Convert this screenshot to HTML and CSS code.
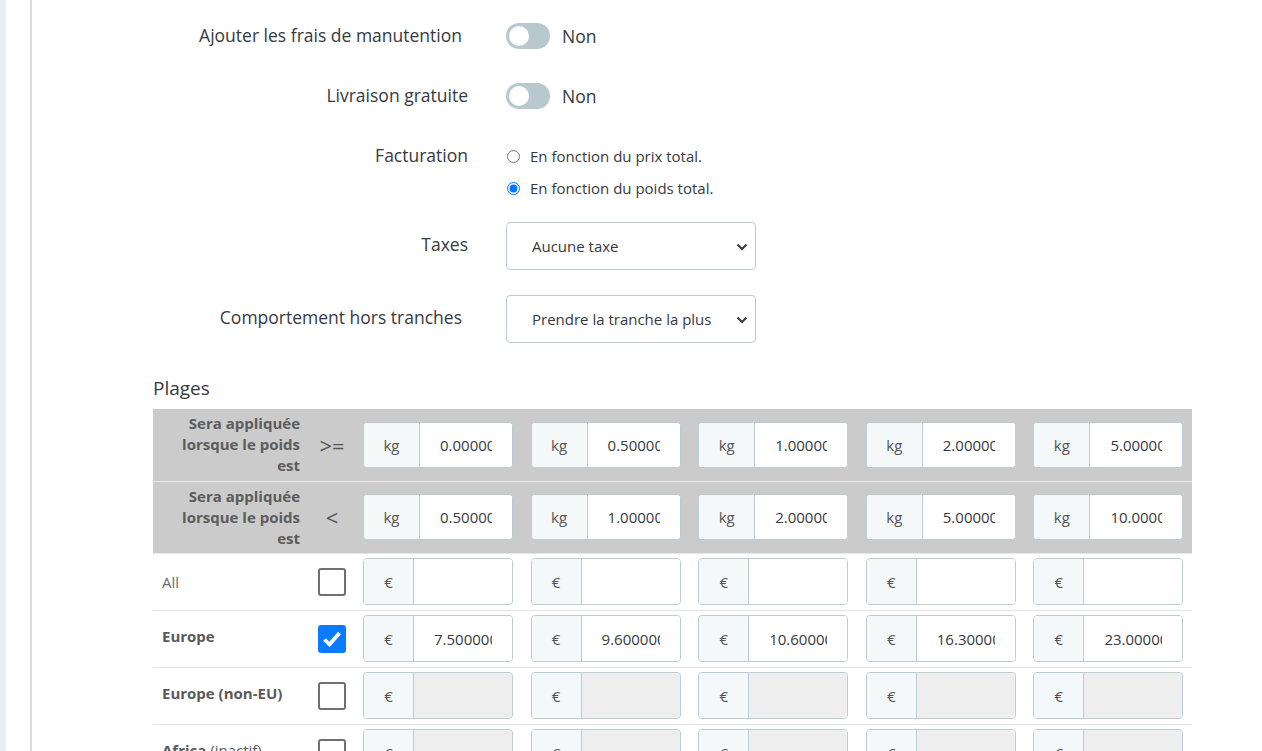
FILE: index.html
```html
<!DOCTYPE html>
<html lang="fr">
<head>
    <meta charset="UTF-8">
    <meta name="viewport" content="width=device-width, initial-scale=1.0">
    <title>Transporteur - Frais d'expédition</title>
    <link rel="stylesheet" href="styles.css">
</head>
<body>

<div class="page">
    <div class="rail"></div>
    <div class="gutter"></div>

    <main class="content">

        <!-- Options -->
        <div class="form-row row-handling">
            <label class="form-label help">Ajouter les frais de manutention</label>
            <div class="form-control">
                <span class="switch"><span class="knob"></span></span>
                <span class="switch-text">Non</span>
            </div>
        </div>

        <div class="form-row row-free">
            <label class="form-label">Livraison gratuite</label>
            <div class="form-control">
                <span class="switch"><span class="knob"></span></span>
                <span class="switch-text">Non</span>
            </div>
        </div>

        <div class="form-row row-billing">
            <label class="form-label label-tall">Facturation</label>
            <div class="radio-list">
                <label class="radio"><input type="radio" name="billing"> En fonction du prix total.</label>
                <label class="radio"><input type="radio" name="billing" checked> En fonction du poids total.</label>
            </div>
        </div>

        <div class="form-row row-tax">
            <label class="form-label label-select">Taxes</label>
            <div class="select-wrap">
                <select class="select">
                    <option>Aucune taxe</option>
                </select>
                <svg class="chevron" width="12" height="8" viewBox="0 0 12 8"><path d="M1.5 1.5 L6 6 L10.5 1.5" fill="none" stroke="#363a41" stroke-width="2"/></svg>
            </div>
        </div>

        <div class="form-row row-range">
            <label class="form-label label-select help">Comportement hors tranches</label>
            <div class="select-wrap">
                <select class="select">
                    <option>Prendre la tranche la plus</option>
                </select>
                <svg class="chevron" width="12" height="8" viewBox="0 0 12 8"><path d="M1.5 1.5 L6 6 L10.5 1.5" fill="none" stroke="#363a41" stroke-width="2"/></svg>
            </div>
        </div>

        <!-- Ranges -->
        <h3 class="section-title">Plages</h3>

        <table class="ranges">
            <colgroup>
                <col class="col-zone">
                <col class="col-op">
                <col span="5">
            </colgroup>
            <thead>
                <tr class="range-row">
                    <th class="cond">Sera appliquée lorsque le poids est</th>
                    <th class="op">&gt;=</th>
                    <td><div class="input-group"><span class="addon addon-kg">kg</span><input class="field" value="0.000000"></div></td>
                    <td><div class="input-group"><span class="addon addon-kg">kg</span><input class="field" value="0.500000"></div></td>
                    <td><div class="input-group"><span class="addon addon-kg">kg</span><input class="field" value="1.000000"></div></td>
                    <td><div class="input-group"><span class="addon addon-kg">kg</span><input class="field" value="2.000000"></div></td>
                    <td><div class="input-group"><span class="addon addon-kg">kg</span><input class="field" value="5.000000"></div></td>
                </tr>
                <tr class="range-row">
                    <th class="cond">Sera appliquée lorsque le poids est</th>
                    <th class="op">&lt;</th>
                    <td><div class="input-group"><span class="addon addon-kg">kg</span><input class="field" value="0.500000"></div></td>
                    <td><div class="input-group"><span class="addon addon-kg">kg</span><input class="field" value="1.000000"></div></td>
                    <td><div class="input-group"><span class="addon addon-kg">kg</span><input class="field" value="2.000000"></div></td>
                    <td><div class="input-group"><span class="addon addon-kg">kg</span><input class="field" value="5.000000"></div></td>
                    <td><div class="input-group"><span class="addon addon-kg">kg</span><input class="field" value="10.000000"></div></td>
                </tr>
            </thead>
            <tbody>
                <tr class="zone-row">
                    <td class="zone">All</td>
                    <td class="op-cell"><span class="check"></span></td>
                    <td><div class="input-group"><span class="addon">€</span><input class="field"></div></td>
                    <td><div class="input-group"><span class="addon">€</span><input class="field"></div></td>
                    <td><div class="input-group"><span class="addon">€</span><input class="field"></div></td>
                    <td><div class="input-group"><span class="addon">€</span><input class="field"></div></td>
                    <td><div class="input-group"><span class="addon">€</span><input class="field"></div></td>
                </tr>
                <tr class="zone-row">
                    <td class="zone zone-name">Europe</td>
                    <td class="op-cell">
                        <span class="check checked">
                            <svg width="22" height="22" viewBox="0 0 22 22"><path d="M3.5 11.5 L8.5 16.5 L18.5 5" fill="none" stroke="#fff" stroke-width="3.8"/></svg>
                        </span>
                    </td>
                    <td><div class="input-group"><span class="addon">€</span><input class="field" value="7.500000"></div></td>
                    <td><div class="input-group"><span class="addon">€</span><input class="field" value="9.600000"></div></td>
                    <td><div class="input-group"><span class="addon">€</span><input class="field" value="10.600000"></div></td>
                    <td><div class="input-group"><span class="addon">€</span><input class="field" value="16.300000"></div></td>
                    <td><div class="input-group"><span class="addon">€</span><input class="field" value="23.000000"></div></td>
                </tr>
                <tr class="zone-row">
                    <td class="zone zone-name">Europe (non-EU)</td>
                    <td class="op-cell"><span class="check"></span></td>
                    <td><div class="input-group"><span class="addon">€</span><input class="field" disabled></div></td>
                    <td><div class="input-group"><span class="addon">€</span><input class="field" disabled></div></td>
                    <td><div class="input-group"><span class="addon">€</span><input class="field" disabled></div></td>
                    <td><div class="input-group"><span class="addon">€</span><input class="field" disabled></div></td>
                    <td><div class="input-group"><span class="addon">€</span><input class="field" disabled></div></td>
                </tr>
                <tr class="zone-row">
                    <td class="zone zone-name">Africa <span class="inactive">(inactif)</span></td>
                    <td class="op-cell"><span class="check"></span></td>
                    <td><div class="input-group"><span class="addon">€</span><input class="field" disabled></div></td>
                    <td><div class="input-group"><span class="addon">€</span><input class="field" disabled></div></td>
                    <td><div class="input-group"><span class="addon">€</span><input class="field" disabled></div></td>
                    <td><div class="input-group"><span class="addon">€</span><input class="field" disabled></div></td>
                    <td><div class="input-group"><span class="addon">€</span><input class="field" disabled></div></td>
                </tr>
            </tbody>
        </table>

    </main>
</div>

</body>
</html>
```

FILE: styles.css
```css
* {
    margin: 0;
    padding: 0;
    box-sizing: border-box;
}

html, body {
    height: 100%;
    overflow: hidden;
}

body {
    font-family: 'Open Sans', 'Noto Sans', sans-serif;
    color: #363a41;
    background-color: #fff;
}

.page {
    display: flex;
    min-height: 100%;
}

/* left chrome */
.rail {
    width: 6px;
    background-color: #eceff1;
    flex-shrink: 0;
}

.gutter {
    width: 24px;
    flex-shrink: 0;
}

.content {
    flex: 1;
    border-left: 2px solid #dcdcdc;
    padding-left: 121px;
}

/* form rows */
.form-row {
    display: flex;
    align-items: flex-start;
}

.form-label {
    width: 315px;
    flex-shrink: 0;
    text-align: right;
    font-size: 17.5px;
    line-height: 22px;
    padding-top: 1px;
}

.form-label.help {
    padding-right: 6px;
}

.form-label.label-tall {
    line-height: 30px;
    padding-top: 0;
}

.form-label.label-select {
    padding-top: 11px;
}

.form-control,
.radio-list,
.select-wrap {
    margin-left: 38px;
}

.row-handling { margin-top: 23px; }
.row-free { margin-top: 34px; }
.row-billing { margin-top: 31px; }
.row-tax { margin-top: 18px; }
.row-range { margin-top: 25px; }

/* switch */
.form-control {
    display: flex;
    align-items: center;
    gap: 12px;
    height: 26px;
}

.switch {
    width: 44px;
    height: 26px;
    border-radius: 13px;
    background-color: #b7c9ce;
    display: flex;
    align-items: center;
    padding-left: 3px;
}

.knob {
    width: 20px;
    height: 20px;
    border-radius: 50%;
    background-color: #fff;
}

.switch-text {
    font-size: 17.5px;
    line-height: 26px;
}

/* radios */
.radio-list {
    display: flex;
    flex-direction: column;
}

.radio {
    display: flex;
    align-items: center;
    height: 32px;
    font-size: 15px;
    gap: 10px;
}

.radio input {
    width: 13px;
    height: 13px;
    margin: 0 0 0 1px;
}

/* selects */
.select-wrap {
    position: relative;
    width: 250px;
}

.select {
    appearance: none;
    width: 100%;
    height: 48px;
    border: 1px solid #bbcdd2;
    border-radius: 4px;
    background-color: #fff;
    padding: 0 40px 0 25px;
    font-family: inherit;
    font-size: 15px;
    color: #363a41;
}

.chevron {
    position: absolute;
    right: 8px;
    top: 21px;
    pointer-events: none;
}

/* ranges table */
.section-title {
    font-size: 19px;
    font-weight: normal;
    line-height: 24px;
    margin-top: 33px;
    margin-bottom: 9px;
}

.ranges {
    width: 1039px;
    border-collapse: collapse;
    table-layout: fixed;
}

.col-zone { width: 157px; }
.col-op { width: 44px; }

.ranges td,
.ranges th {
    padding: 0 9px;
    vertical-align: middle;
}

.range-row {
    background-color: #cbcbcb;
    border-bottom: 1px solid #e8e8e8;
}

.range-row td {
    height: 72px;
}

.cond {
    text-align: right;
    font-size: 15px;
    font-weight: bold;
    line-height: 21px;
    color: #5c5c5c;
    padding-right: 10px !important;
}

.op {
    font-size: 22px;
    font-weight: normal;
    color: #555;
    text-align: center;
    padding: 0 !important;
}

.zone-row {
    border-bottom: 1px solid #e5e5e5;
}

.zone-row td {
    height: 57px;
}

.zone {
    font-size: 15px;
    color: #6c6c6c;
}

.zone-name {
    font-weight: bold;
    color: #5a5a5a;
    padding-bottom: 6px !important;
}

.inactive {
    font-weight: normal;
}

.op-cell {
    padding: 0 !important;
    text-align: center;
}

.check {
    display: inline-flex;
    align-items: center;
    justify-content: center;
    width: 28px;
    height: 28px;
    border: 2px solid #707070;
    border-radius: 3px;
    background-color: #fff;
    vertical-align: middle;
}

.check.checked {
    border-color: #0a7bff;
    background-color: #0a7bff;
}

.input-group {
    display: flex;
    width: 150px;
    height: 47px;
    border: 1px solid #bbcdd2;
    border-radius: 4px;
    overflow: hidden;
    background-color: #fff;
}

.range-row .input-group {
    height: 46px;
}

.addon {
    width: 50px;
    flex-shrink: 0;
    display: flex;
    align-items: center;
    justify-content: center;
    background-color: #f4f8f9;
    border-right: 1px solid #bbcdd2;
    font-size: 15px;
    color: #555;
}

.addon-kg {
    width: 56px;
}

.field {
    flex: 1;
    min-width: 0;
    border: none;
    padding: 0 20px;
    font-family: inherit;
    font-size: 15px;
    color: #363a41;
    background-color: #fff;
}

.field:disabled {
    background-color: #eeeeee;
}
```
